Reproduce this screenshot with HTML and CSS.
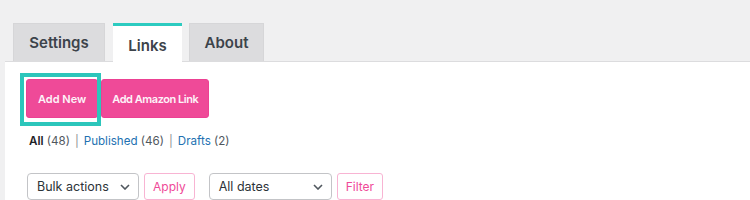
FILE: index.html
```html
<!DOCTYPE html>
<html>
<head>
<meta charset="utf-8">
<link rel="stylesheet" href="styles.css">
</head>
<body>
<div class="wrap">
  <nav class="tabs">
    <div class="tab tab-settings">Settings</div>
    <div class="tab active">Links</div>
    <div class="tab tab-about">About</div>
  </nav>
  <div class="panel">
    <div class="actions">
      <button class="btn btn-primary highlight">Add New</button>
      <button class="btn btn-primary btn-amazon">Add Amazon Link</button>
    </div>
    <ul class="status">
      <li><b class="current">All</b> <span class="count">(48)</span></li>
      <li class="sep">|</li>
      <li><a class="link">Published</a> <span class="count">(46)</span></li>
      <li class="sep">|</li>
      <li><a class="link">Drafts</a> <span class="count">(2)</span></li>
    </ul>
    <div class="filters">
      <div class="select sel-bulk"><span>Bulk actions</span><svg class="chev" width="10" height="6" viewBox="0 0 10 6"><path d="M1 1l4 4 4-4" fill="none" stroke="#50575e" stroke-width="1.6"/></svg></div>
      <button class="btn btn-outline">Apply</button>
      <div class="select sel-dates"><span>All dates</span><svg class="chev" width="10" height="6" viewBox="0 0 10 6"><path d="M1 1l4 4 4-4" fill="none" stroke="#50575e" stroke-width="1.6"/></svg></div>
      <button class="btn btn-outline">Filter</button>
    </div>
  </div>
</div>
</body>
</html>
```
FILE: styles.css
```css
* { box-sizing: border-box; }
html, body { margin: 0; height: 100%; }
body {
  background: #f0f0f1;
  font-family: Inter, "Liberation Sans", sans-serif;
  color: #1d2327;
  overflow: hidden;
}
.wrap {
  padding: 23px 0 0 5px;
  height: 100%;
  display: flex;
  flex-direction: column;
}
.tabs {
  display: flex;
  align-items: flex-start;
  gap: 8px;
  padding-left: 8px;
  position: relative;
  z-index: 1;
  margin-bottom: -1px;
}
.tab {
  height: 38px;
  background: #dcdcde;
  border: 1px solid #d6d6d8;
  border-bottom: none;
  font-size: 15px;
  font-weight: 600;
  color: #3c434a;
  display: flex;
  align-items: center;
  justify-content: center;
}
.tab-settings { width: 92px; }
.tab-about { width: 75px; margin-left: -1px; }
.tab.active {
  background: #fff;
  border: none;
  border-top: 3px solid #2ccbc0;
  height: 39px;
  padding-top: 3px;
  width: 69px;
}
.panel {
  flex: 1;
  background: #fff;
  border-top: 1px solid #dcdcde;
  padding: 17px 0 0 21px;
}
.actions {
  display: flex;
  gap: 3px;
}
.btn {
  font-family: inherit;
  cursor: pointer;
  border-radius: 3px;
}
.btn-primary {
  position: relative;
  height: 39px;
  padding: 0 11px;
  background: #ef4a98;
  border: 1px solid #ec4193;
  color: #fdf3f8;
  font-size: 11px;
  font-weight: 600;
}
.btn-amazon {
  padding: 0 10px;
  letter-spacing: -0.45px;
}
.highlight::after {
  content: "";
  position: absolute;
  left: -7px;
  top: -7px;
  right: -4px;
  bottom: -9px;
  border: 4px solid #2cc6bb;
}
.status {
  list-style: none;
  margin: 15px 0 0 3px;
  padding: 0;
  display: flex;
  gap: 5px;
  font-size: 11.6px;
  line-height: 16px;
  color: #50575e;
}
.status .current { color: #1d2327; font-weight: 600; }
.status .link { color: #2271b1; }
.status .sep { color: #8c8f94; }
.filters {
  margin-top: 24px;
  display: flex;
  align-items: center;
}
.select {
  height: 27px;
  border: 1px solid #c3c4c7;
  border-radius: 4px;
  display: flex;
  align-items: center;
  justify-content: space-between;
  padding: 0 8px 0 9px;
  font-size: 12.5px;
  color: #2c3338;
}
.sel-bulk { width: 112px; margin-left: 1px; }
.sel-dates { width: 123px; margin-left: 14px; }
.btn-outline {
  height: 27px;
  margin-left: 5px;
  padding: 0 8px;
  background: #fff;
  border: 1px solid #f8b4d3;
  color: #ef4a98;
  font-size: 12px;
}
```
